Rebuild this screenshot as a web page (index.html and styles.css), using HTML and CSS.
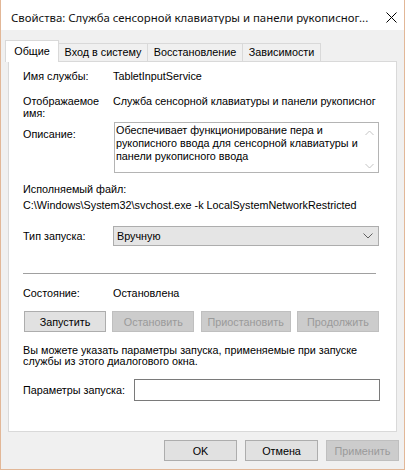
FILE: index.html
```html
<!DOCTYPE html>
<html lang="ru">
<head>
<meta charset="utf-8">
<title>Свойства службы</title>
<link rel="stylesheet" href="styles.css">
</head>
<body>
<div class="window">
  <div class="titlebar">
    <span class="title">Свойства: Служба сенсорной клавиатуры и панели рукописног...</span>
    <svg class="close" width="11" height="11" viewBox="0 0 11 11">
      <path d="M0.5 0.5 L10.5 10.5 M10.5 0.5 L0.5 10.5" stroke="#000" stroke-width="1" fill="none"/>
    </svg>
  </div>
  <div class="client">
    <div class="tabs">
      <div class="tab tab-active">Общие</div>
      <div class="tab tab-logon">Вход в систему</div>
      <div class="tab tab-recovery">Восстановление</div>
      <div class="tab tab-deps">Зависимости</div>
    </div>
    <div class="panel">
      <div class="row row-name">
        <span class="label">Имя службы:</span>
        <span class="value">TabletInputService</span>
      </div>
      <div class="row row-display">
        <span class="label label-wrap">Отображаемое имя:</span>
        <span class="value">Служба сенсорной клавиатуры и панели рукописног</span>
      </div>
      <div class="row row-desc">
        <span class="label label-desc">Описание:</span>
        <div class="textbox">
          <div class="textbox-text">Обеспечивает функционирование пера и рукописного ввода для сенсорной клавиатуры и панели рукописного ввода</div>
          <div class="scrollbar">
            <svg width="9" height="6" viewBox="0 0 9 6"><path d="M0.5 5 L4.5 1 L8.5 5" stroke="#c4c4c4" stroke-width="1" fill="none"/></svg>
            <svg width="9" height="6" viewBox="0 0 9 6"><path d="M0.5 1 L4.5 5 L8.5 1" stroke="#c4c4c4" stroke-width="1" fill="none"/></svg>
          </div>
        </div>
      </div>
      <div class="exe-label">Исполняемый файл:</div>
      <div class="exe-path">C:\Windows\System32\svchost.exe -k LocalSystemNetworkRestricted</div>
      <div class="row row-start">
        <span class="label">Тип запуска:</span>
        <div class="combo">
          <span>Вручную</span>
          <svg width="10" height="6" viewBox="0 0 10 6"><path d="M0.5 0.5 L5 5 L9.5 0.5" stroke="#606060" stroke-width="1" fill="none"/></svg>
        </div>
      </div>
      <div class="separator"></div>
      <div class="row row-state">
        <span class="label">Состояние:</span>
        <span class="value">Остановлена</span>
      </div>
      <div class="service-buttons">
        <button class="btn">Запустить</button>
        <button class="btn" disabled>Остановить</button>
        <button class="btn" disabled>Приостановить</button>
        <button class="btn" disabled>Продолжить</button>
      </div>
      <p class="hint">Вы можете указать параметры запуска, применяемые при запуске службы из этого диалогового окна.</p>
      <div class="row row-params">
        <span class="label">Параметры запуска:</span>
        <div class="input"></div>
      </div>
    </div>
    <div class="footer">
      <button class="btn btn-dialog">OK</button>
      <button class="btn btn-dialog">Отмена</button>
      <button class="btn btn-dialog" disabled>Применить</button>
    </div>
  </div>
</div>
</body>
</html>
```

FILE: styles.css
```css
* {
  box-sizing: border-box;
}

html, body {
  margin: 0;
  padding: 0;
  background: #e6bfa3;
}

body {
  font-family: "Liberation Sans", Arial, sans-serif;
  font-size: 10.8px;
  line-height: 13px;
  color: #000;
}

.window {
  width: 405px;
  height: 470px;
  display: flex;
  flex-direction: column;
  border-left: 1px solid #e2b797;
  border-right: 1px solid #e2b797;
  border-bottom: 1px solid #e2b797;
  background: #f0f0f0;
}

/* Title bar */
.titlebar {
  height: 30px;
  flex: none;
  background: #fff;
  display: flex;
  align-items: center;
  padding-left: 10px;
  padding-right: 7px;
}

.title {
  flex: 1;
  min-width: 0;
  overflow: hidden;
  font-family: "Noto Sans", "Open Sans", sans-serif;
  font-size: 11.4px;
  color: #111;
  white-space: nowrap;
  padding-top: 4px;
}

.close {
  flex: none;
  margin-top: 4px;
}

/* Client area */
.client {
  flex: 1;
  display: flex;
  flex-direction: column;
  background: #f0f0f0;
}

.tabs {
  display: flex;
  align-items: flex-end;
  margin-top: 10px;
  margin-left: 4px;
  height: 21px;
  position: relative;
  z-index: 1;
}

.tab {
  height: 18px;
  border: 1px solid #d9d9d9;
  border-bottom: none;
  border-left: none;
  background: #f0f0f0;
  padding: 2px 0 0 0;
  text-align: center;
  white-space: nowrap;
}

.tab-active {
  height: 22px;
  margin-bottom: -1px;
  background: #fff;
  border-left: 1px solid #d9d9d9;
  width: 54px;
  padding-top: 4px;
}

.tab-logon { width: 89px; }
.tab-recovery { width: 95px; }
.tab-deps { width: 78px; }

/* Tab page */
.panel {
  margin: 0 7px;
  height: 371px;
  background: #fff;
  border: 1px solid #d9d9d9;
  padding: 8px 17px 0 14px;
}

.row {
  display: grid;
  grid-template-columns: 90px 1fr;
}

.label,
.value {
  white-space: nowrap;
}

.label-wrap {
  white-space: normal;
  width: 70px;
  line-height: 12px;
}

.row-display {
  margin-top: 12px;
}

.row-desc {
  margin-top: 3px;
}

.label-desc {
  padding-top: 6px;
}

.textbox {
  margin-left: 1px;
  height: 51px;
  border: 1px solid #b4b4b4;
  display: flex;
}

.textbox-text {
  flex: 1;
  padding: 1px 0 0 1px;
}

.scrollbar {
  width: 17px;
  display: flex;
  flex-direction: column;
  justify-content: space-between;
  align-items: center;
  padding: 7px 0 3px 0;
}

.exe-label {
  margin-top: 10px;
}

.exe-path {
  margin-top: 3px;
  white-space: nowrap;
}

.row-start {
  margin-top: 14px;
  align-items: center;
}

.combo {
  height: 20px;
  background: #e5e5e5;
  border: 1px solid #adadad;
  display: flex;
  align-items: center;
  justify-content: space-between;
  padding: 0 5px 0 3px;
}

.separator {
  margin-top: 27px;
  margin-right: 3px;
  height: 1px;
  background: #a0a0a0;
}

.row-state {
  margin-top: 13px;
}

.service-buttons {
  display: flex;
  justify-content: space-between;
  margin-top: 11px;
  padding-left: 1px;
}

.btn {
  font-family: "Liberation Sans", Arial, sans-serif;
  font-size: 10.8px;
  height: 21px;
  width: 82px;
  padding: 0;
  background: #e1e1e1;
  border: 1px solid #adadad;
  color: #000;
}

.service-buttons .btn:nth-child(3) {
  width: 90px;
}

.btn:disabled {
  background: #cccccc;
  border-color: #bfbfbf;
  color: #9a9a9a;
}

.hint {
  margin: 13px 0 0 0;
  line-height: 11px;
}

.row-params {
  grid-template-columns: 111px 1fr;
  margin-top: 12px;
  align-items: center;
}

.input {
  height: 22px;
  margin-right: -1px;
  border: 1px solid #7a7a7a;
  background: #fff;
}

/* Dialog buttons */
.footer {
  display: flex;
  justify-content: flex-end;
  gap: 8px;
  margin-top: 8px;
  padding-right: 5px;
}

.btn-dialog {
  width: 73px;
}
```
